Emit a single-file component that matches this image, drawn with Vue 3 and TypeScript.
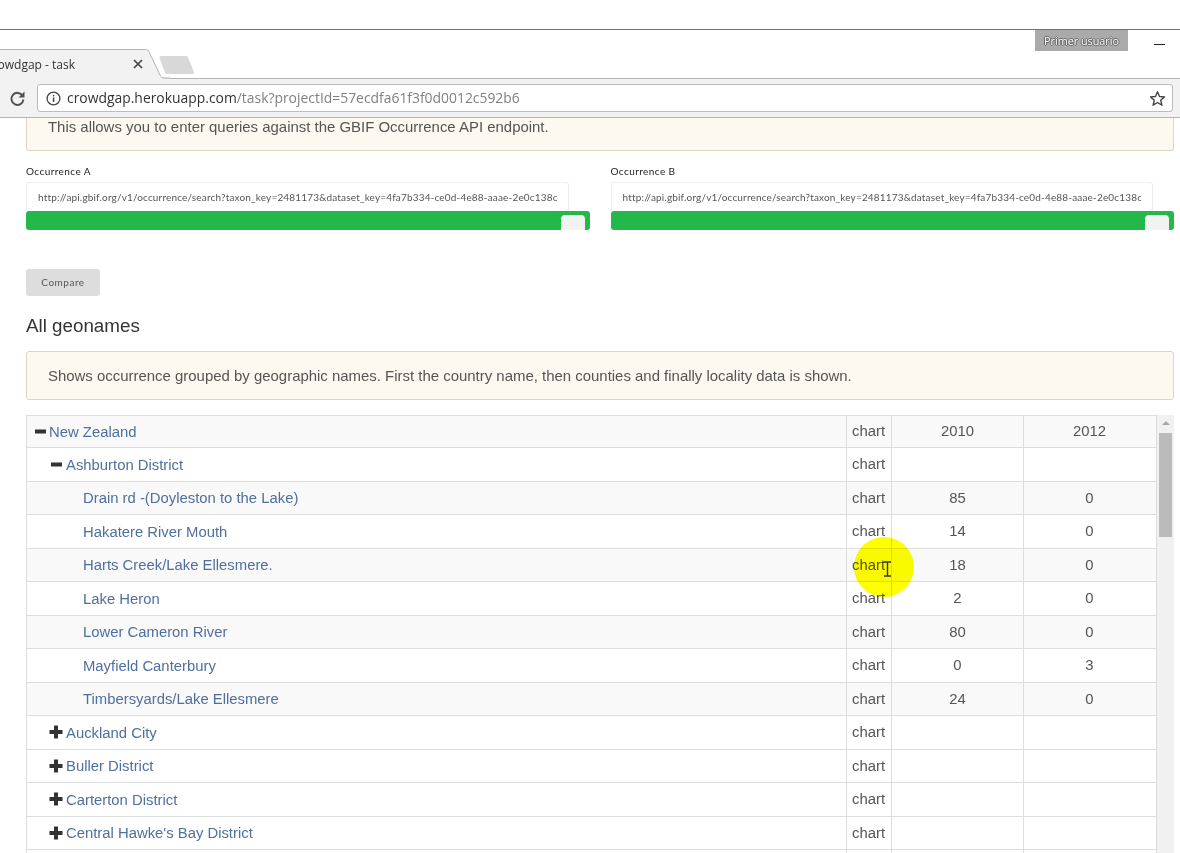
<script setup lang="ts">
interface Row { name: string; level: number; icon?: 'minus' | 'plus'; a?: string; b?: string; striped?: boolean }
const rows: Row[] = [
  { name: 'New Zealand', level: 0, icon: 'minus', a: '2010', b: '2012', striped: true },
  { name: 'Ashburton District', level: 1, icon: 'minus' },
  { name: 'Drain rd -(Doyleston to the Lake)', level: 2, a: '85', b: '0', striped: true },
  { name: 'Hakatere River Mouth', level: 2, a: '14', b: '0' },
  { name: 'Harts Creek/Lake Ellesmere.', level: 2, a: '18', b: '0', striped: true },
  { name: 'Lake Heron', level: 2, a: '2', b: '0' },
  { name: 'Lower Cameron River', level: 2, a: '80', b: '0', striped: true },
  { name: 'Mayfield Canterbury', level: 2, a: '0', b: '3' },
  { name: 'Timbersyards/Lake Ellesmere', level: 2, a: '24', b: '0', striped: true },
  { name: 'Auckland City', level: 1, icon: 'plus' },
  { name: 'Buller District', level: 1, icon: 'plus' },
  { name: 'Carterton District', level: 1, icon: 'plus' },
  { name: "Central Hawke's Bay District", level: 1, icon: 'plus' },
  { name: '', level: 1 },
]
const url = 'http://api.gbif.org/v1/occurrence/search?taxon_key=2481173&dataset_key=4fa7b334-ce0d-4e88-aaae-2e0c138c'
const occurrences = ['Occurrence A', 'Occurrence B']
</script>

<template>
  <div class="screen">
    <div class="top-white"></div>
    <div class="strip">
      <div class="tab">
        <svg class="tab-shape" width="170" height="30" viewBox="0 0 170 30">
          <path d="M-2 .5H145.500c2 0 3 1 3.600 2.500L160 26c.8 2 2 3.500 5 3.500H170V31H-2Z" fill="#f2f2f2" />
          <path d="M-2 .5H145.500c2 0 3 1 3.600 2.500L160 26c.8 2 2 3 5 3H170" fill="none" stroke="#b4b4b4" />
        </svg>
        <span class="tab-title">crowdgap - task</span>
        <svg class="tab-close" width="10" height="10" viewBox="0 0 10 10">
          <path d="M1 1l8 8M9 1l-8 8" stroke="#444" stroke-width="1.700" />
        </svg>
      </div>
      <svg class="new-tab" width="37" height="19" viewBox="0 0 37 19">
        <path d="M.5 2C.2.8.8 0 2 0H27c1 0 1.700.5 2.100 1.500L35 16c.4 1.200-.2 2-1.500 2H8c-1 0-1.600-.5-2-1.500Z" fill="#d8d8d8" />
      </svg>
      <div class="strip-spacer"></div>
      <div class="user-badge">Primer usuario</div>
      <div class="minimize"></div>
    </div>
    <div class="toolbar">
      <svg class="reload" width="17" height="17" viewBox="0 0 17 17">
        <path d="M13.600 5.800A6 6 0 1 0 14.400 9.500" fill="none" stroke="#505050" stroke-width="2" />
        <path d="M15.500 1.500V7.500H9.500Z" fill="#505050" />
      </svg>
      <div class="omnibox">
        <svg class="info" width="15" height="15" viewBox="0 0 15 15">
          <circle cx="7.500" cy="7.500" r="6.400" fill="none" stroke="#444" stroke-width="1.300" />
          <rect x="6.800" y="6.500" width="1.500" height="4.500" fill="#444" />
          <rect x="6.800" y="3.900" width="1.500" height="1.500" fill="#444" />
        </svg>
        <span class="url"><span class="url-host">crowdgap.herokuapp.com</span>/task?projectId=57ecdfa61f3f0d0012c592b6</span>
        <svg class="star" width="17" height="17" viewBox="0 0 17 17">
          <path d="M8.500 1.800l2 4.700 5 .4-3.800 3.300 1.200 5-4.400-2.700-4.400 2.700 1.200-5L1.500 6.900l5-.4Z" fill="none" stroke="#444" stroke-width="1.400" stroke-linejoin="round" />
        </svg>
      </div>
    </div>

    <main class="content">
      <div class="alert alert-clipped">This allows you to enter queries against the GBIF Occurrence API endpoint.</div>

      <div class="occurrences">
        <div v-for="label in occurrences" :key="label" class="occurrence">
          <label class="occ-label">{{ label }}</label>
          <div class="occ-input"><span>{{ url }}</span></div>
          <div class="occ-bar"><span class="occ-handle"></span></div>
        </div>
      </div>

      <button class="compare" type="button">Compare</button>

      <h2 class="heading">All geonames</h2>
      <div class="alert alert-full">Shows occurrence grouped by geographic names. First the country name, then counties and finally locality data is shown.</div>

      <div class="table-area">
        <div class="table">
          <div v-for="(row, i) in rows" :key="i" class="row" :class="{ striped: row.striped }">
            <div class="cell cell-name" :class="'level-' + row.level">
              <svg v-if="row.icon === 'minus'" class="tree-icon" width="13" height="13" viewBox="0 0 13 13">
                <rect x="1" y="4.500" width="11" height="4" fill="#333" />
              </svg>
              <svg v-else-if="row.icon === 'plus'" class="tree-icon tree-plus" width="14" height="14" viewBox="0 0 14 14">
                <path d="M5 .5h4v4.500h4.500v4H9v4.500H5V9H.5V5H5Z" fill="#333" />
              </svg>
              <a v-if="row.name" class="link">{{ row.name }}</a>
            </div>
            <div class="cell cell-chart"><template v-if="row.name">chart</template></div>
            <div class="cell cell-num">{{ row.a }}</div>
            <div class="cell cell-num">{{ row.b }}</div>
          </div>
        </div>
        <div class="scrollbar">
          <span class="scroll-arrow"></span>
          <span class="scroll-thumb"></span>
        </div>
      </div>
    </main>

    <div class="highlight"></div>
    <svg class="ibeam" width="9" height="16" viewBox="0 0 9 16">
      <path d="M1 1h7M1 15h7M4.500 1v14" fill="none" stroke="#333" stroke-width="1.400" />
    </svg>
  </div>
</template>

<style>
html, body { margin: 0; background: #fff; overflow: hidden; }
</style>

<style scoped>
.screen {
  position: relative;
  width: 1180px;
  height: 853px;
  overflow: hidden;
  background: #fff;
  font-family: "Liberation Sans", Arial, sans-serif;
  font-size: 15px;
  color: #555;
}
.top-white { height: 29px; border-bottom: 1px solid #2a85c8; box-sizing: content-box; }
.strip {
  display: flex;
  height: 48px;
  background: #fff;
  border-bottom: 1px solid #b4b4b4;
  box-sizing: content-box;
}
.tab { position: relative; width: 159px; flex: none; height: 48px; }
.tab-shape { position: absolute; left: 0; top: 19px; overflow: visible; z-index: 1; }
.tab-title {
  position: absolute;
  z-index: 2;
  right: 84px;
  top: 26px;
  white-space: nowrap;
  font: 12px/17px "Open Sans", sans-serif;
  color: #333;
}
.tab-close { position: absolute; z-index: 2; left: 133px; top: 29px; }
.new-tab { flex: none; margin-top: 26px; position: relative; z-index: 0; }
.strip-spacer { flex: 1; }
.user-badge {
  flex: none;
  width: 93px;
  height: 21px;
  margin-right: 26px;
  background: #aaa;
  color: #fff;
  font: 10.800px/21px "Open Sans", sans-serif;
  text-align: center;
  text-shadow: 1px 0 0 #666, -1px 0 0 #666, 0 1px 0 #666, 0 -1px 0 #666;
}
.minimize { flex: none; width: 11px; height: 1px; margin: 14px 15px 0 0; background: #222; }
.toolbar {
  display: flex;
  align-items: center;
  gap: 11px;
  height: 38px;
  padding: 0 7px 0 9px;
  background: #f2f2f2;
  border-bottom: 1px solid #b4b4b4;
  box-sizing: content-box;
  position: relative;
  z-index: 3;
}
.reload { flex: none; }
.omnibox {
  flex: 1;
  display: flex;
  align-items: center;
  height: 28px;
  box-sizing: border-box;
  padding: 0 6px 0 8px;
  background: #fff;
  border: 1px solid #bcbcbc;
  border-radius: 3px;
}
.info { flex: none; }
.url {
  flex: 1;
  margin-left: 6px;
  font: 13.900px/26px "Open Sans", sans-serif;
  color: #808080;
  white-space: nowrap;
}
.url-host { color: #333; }
.star { flex: none; }

.content { padding: 0 6px 0 26px; }
.alert {
  box-sizing: border-box;
  padding-left: 21px;
  background: #fdf9f0;
  border: 1px solid #ddd5c3;
  border-radius: 3px;
  font-size: 14.950px;
  color: #555;
}
.alert-clipped {
  height: 33px;
  border-top: none;
  border-radius: 0 0 3px 3px;
  line-height: 17px;
}
.alert-full { height: 49px; line-height: 47px; }

.occurrences {
  display: grid;
  grid-template-columns: minmax(0, 1fr) minmax(0, 1fr);
  column-gap: 21px;
  margin-top: 15px;
}
.occurrence { min-width: 0; }
.occ-label {
  display: block;
  height: 16px;
  font: 400 10px/11px Lato, sans-serif;
  letter-spacing: .42px;
  color: #222;
}
.occ-input {
  box-sizing: border-box;
  height: 29px;
  margin-right: 21px;
  padding: 0 11px;
  background: #fff;
  border: 1px solid #eee;
  border-bottom: none;
  border-radius: 3px 3px 0 0;
  font: 10px/29px Lato, sans-serif;
  letter-spacing: .17px;
  color: #555;
  overflow: hidden;
  white-space: nowrap;
}
.occ-input span { display: block; overflow: hidden; }
.occ-bar {
  position: relative;
  height: 19px;
  background: #22b84a;
  border-radius: 3px;
}
.occ-handle {
  position: absolute;
  right: 5px;
  bottom: 0;
  width: 24px;
  height: 15px;
  background: #f1f2f2;
  border-radius: 4px 4px 0 0;
}
.compare {
  display: block;
  width: 74px;
  height: 27px;
  margin-top: 39px;
  padding: 0;
  background: #ddd;
  border: none;
  border-radius: 3px;
  font: 10px/27px Lato, sans-serif;
  letter-spacing: .5px;
  color: #555;
}
.heading {
  margin: 18px 0 13px;
  font: 400 18.800px/24px "Liberation Sans", Arial, sans-serif;
  color: #333;
}
.table-area { display: flex; margin-top: 15px; }
.table {
  flex: none;
  width: 1131px;
  box-sizing: border-box;
  border-left: 1px solid #ddd;
  border-top: 1px solid #ddd;
}
.row {
  display: grid;
  grid-template-columns: 820px 45px 132px 133px;
  height: 33.500px;
  box-sizing: border-box;
  border-bottom: 1px solid #ddd;
  background: #fff;
}
.row:first-child { height: 32.300px; }
.row.striped { background: #f9f9f9; }
.cell {
  box-sizing: border-box;
  padding-bottom: 1px;
  border-right: 1px solid #ddd;
  display: flex;
  align-items: center;
  color: #555;
  font-size: 14.850px;
}
.cell-chart { padding-left: 5px; }
.cell-num { justify-content: center; }
.cell-num:last-child { padding-right: 1px; }
.level-0 { padding-left: 7px; }
.level-1 { padding-left: 23px; }
.level-2 { padding-left: 56px; }
.level-1 .tree-icon { margin-right: 3px; }
.tree-icon { flex: none; margin-right: 2px; }
.level-1 .tree-plus { margin-left: -1px; margin-right: 3px; }
.link { color: #4f6f9f; position: relative; top: .5px; }
.scrollbar {
  position: relative;
  flex: none;
  width: 17px;
  background: #f1f1f1;
}
.scroll-arrow {
  position: absolute;
  left: 5px;
  top: 6px;
  border-left: 4px solid transparent;
  border-right: 4px solid transparent;
  border-bottom: 4px solid #a8a8a8;
}
.scroll-thumb {
  position: absolute;
  left: 2px;
  top: 18px;
  width: 13px;
  height: 104px;
  background: #bbb;
}
.highlight {
  position: absolute;
  left: 854px;
  top: 537px;
  width: 60px;
  height: 60px;
  border-radius: 50%;
  background: #ffff00;
  mix-blend-mode: multiply;
}
.ibeam { position: absolute; left: 883px; top: 561px; }
</style>
